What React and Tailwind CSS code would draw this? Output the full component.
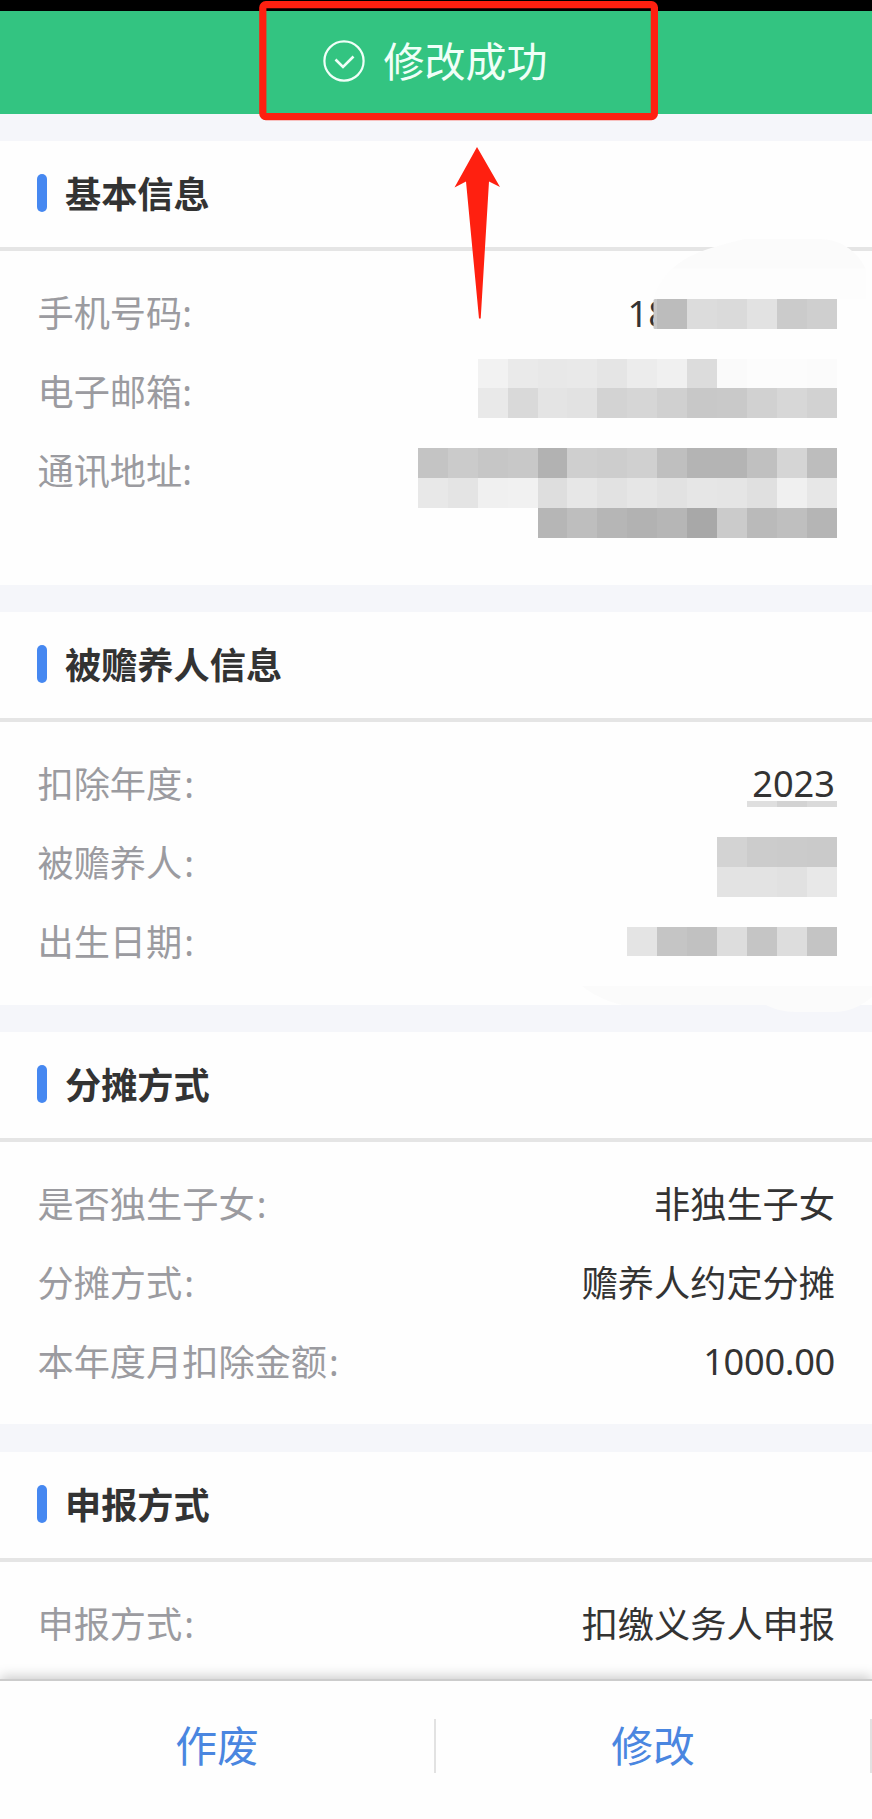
import React from "react";

const sections = [
  {
    title: "基本信息",
    box: "h-[444px] mb-[27px]",
    colon: "ml-0",
    rows: [
      { label: "手机号码", value: "18", valueClass: "mr-[166px]" },
      { label: "电子邮箱" },
      { label: "通讯地址" },
    ],
  },
  {
    title: "被赡养人信息",
    box: "h-[393px] mb-[27px]",
    colon: "ml-[2px]",
    rows: [{ label: "扣除年度", value: "2023", valueClass: "mb-[2px]" }, { label: "被赡养人" }, { label: "出生日期" }],
  },
  {
    title: "分摊方式",
    box: "h-[392px] mb-[28px]",
    colon: "ml-[2px]",
    rows: [
      { label: "是否独生子女", value: "非独生子女" },
      { label: "分摊方式", value: "赡养人约定分摊" },
      { label: "本年度月扣除金额", value: "1000.00", valueClass: "mb-[2px] tracking-[-0.3px]" },
    ],
  },
  {
    title: "申报方式",
    box: "h-[393px]",
    colon: "ml-[2px]",
    rows: [{ label: "申报方式", value: "扣缴义务人申报" }],
  },
];

// Each strip ends at the right content edge, cells listed left to right
const CELL = 29.9;
const RIGHT = 836.5;
const strips = [
  { y: 298.8, cells: ["#bcbcbc", "#dcdcdc", "#dadada", "#e2e2e2", "#cbcbcb", "#cfcfcf"] },
  { y: 358.5, cells: ["#f2f2f2", "#eaeaea", "#e8e8e8", "#e9e9e9", "#e5e5e5", "#ececec", "#f0f0f0", "#dcdcdc", "#fafafa", "#fcfcfc", "#fcfcfc", "#fbfbfb"] },
  { y: 388.4, cells: ["#e9e9e9", "#d9d9d9", "#e4e4e4", "#e2e2e2", "#d3d3d3", "#d6d6d6", "#d0d0d0", "#c8c8c8", "#c9c9c9", "#d1d1d1", "#d7d7d7", "#d2d2d2"] },
  { y: 448.2, cells: ["#c4c4c4", "#cbcbcb", "#c6c6c6", "#c8c8c8", "#b2b2b2", "#cfcfcf", "#cdcdcd", "#d0d0d0", "#bfbfbf", "#b4b4b4", "#b4b4b4", "#c0c0c0", "#d5d5d5", "#bdbdbd"] },
  { y: 478.1, cells: ["#e8e8e8", "#e4e4e4", "#f0f0f0", "#f1f1f1", "#dedede", "#e7e7e7", "#e2e2e2", "#e6e6e6", "#e2e2e2", "#e6e6e6", "#e5e5e5", "#e0e0e0", "#f0f0f0", "#e7e7e7"] },
  { y: 508, cells: ["#b6b6b6", "#bebebe", "#b6b6b6", "#b2b2b2", "#b6b6b6", "#a8a8a8", "#cbcbcb", "#bababa", "#bfbfbf", "#b5b5b5"] },
  { y: 801, h: 6, cells: ["#dfdfdf", "#d3d3d3", "#dadada"] },
  { y: 836.8, cells: ["#d3d3d3", "#cccccc", "#cbcbcb", "#cacaca"] },
  { y: 866.7, cells: ["#e3e3e3", "#e3e3e3", "#e1e1e1", "#e8e8e8"] },
  { y: 926.5, cells: ["#e4e4e4", "#c5c5c5", "#c1c1c1", "#dddddd", "#c5c5c5", "#dddddd", "#c4c4c4"] },
];

function Section({ title, box, colon, rows }) {
  return (
    <section className={`shrink-0 bg-[#fefefe] ${box}`}>
      <div className="h-[110px] border-b-4 border-[#e5e5e5] flex items-center pl-[37px] gap-[18px]">
        <span className="w-[10px] h-[38px] mb-[2px] rounded-full bg-[#4688f1]" />
        <h2 className="text-[36.2px] leading-none font-bold text-[#333333] mt-px">{title}</h2>
      </div>
      <div className="pt-[23px] pl-[37.5px] pr-[37px] text-[36.2px] leading-none">
        {rows.map((row) => (
          <div key={row.label} className="h-[78.8px] flex items-center justify-between">
            <span className="text-[#9b9ba0]">
              {row.label}
              <span className={colon}>:</span>
            </span>
            {row.value && <span className={`text-[#333333] ${row.valueClass || ""}`}>{row.value}</span>}
          </div>
        ))}
      </div>
    </section>
  );
}

function Overlay() {
  return (
    <svg className="absolute inset-0 pointer-events-none" width="872" height="1819" viewBox="0 0 872 1819">
      {/* Brush edges */}
      <path d="M672 269C690 252 716 246 745 239H820C843 240 857 252 866 269Z" fill="#fbfbfb" />
      <path d="M653 299C658 286 663 277 672 268.5H866V299Z" fill="#fdfdfd" />
      <path d="M582 986H872V997C860 1007 848 1012 834 1012H796C783 1012 774 1009 766 1005H622C605 1001 592 994 582 986Z" fill="#fbfbfb" />

      {/* Masked values */}
      <rect x="653.5" y="299" width="4.500" height="30" rx="1.5" fill="#c8c8c8" />
      <g shapeRendering="crispEdges">
        {strips.map((strip) =>
          strip.cells.map((fill, i) => (
            <rect
              key={`${strip.y}-${i}`}
              x={RIGHT - (strip.cells.length - i) * CELL}
              y={strip.y}
              width={CELL}
              height={strip.h || CELL}
              fill={fill}
            />
          ))
        )}
      </g>

      {/* Callout */}
      <rect x="262.8" y="4.6" width="391.6" height="112" rx="3" fill="none" stroke="#ff2010" strokeWidth="7.2" />
      <path d="M477 147L500 187L489 181.500L480.700 318.500H479L466 181.500L454.500 187.500Z" fill="#ff2010" />
    </svg>
  );
}

export default function App() {
  return (
    <div className="relative w-[872px] h-[1819px] overflow-hidden flex flex-col bg-[#f5f6fa] font-['Noto_Sans','Noto_Sans_CJK_SC',sans-serif]">
      <div className="h-[11px] shrink-0 bg-black" />
      <header className="h-[103px] shrink-0 bg-[#33c481] flex items-center justify-center gap-[19px] pr-[2px] text-[#f0fff8]">
        <svg width="42" height="42" viewBox="0 0 42 42" fill="none" stroke="currentColor" strokeWidth="2.2" className="mb-[3px]">
          <circle cx="21" cy="21" r="19.600" />
          <path d="M12.500 19.500L20 27L30.500 16.500" strokeWidth="2.600" />
        </svg>
        <h1 className="text-[41px] leading-none mb-[2px]">修改成功</h1>
      </header>

      <main className="flex-1 min-h-0 overflow-hidden flex flex-col pt-[27px]">
        {sections.map((section) => (
          <Section key={section.title} {...section} />
        ))}
      </main>

      <footer className="relative h-[140px] shrink-0 bg-[#fefefe] border-t-2 border-[#cccccc] shadow-[0_-2px_12px_rgba(0,0,0,0.22)] flex items-start text-[41.8px] leading-none text-[#4a86e0]">
        <button className="flex-1 h-[129px] flex items-center justify-center">作废</button>
        <span className="w-[2px] h-[54px] mt-[38px] bg-[#e2e2e2]" />
        <button className="flex-1 h-[129px] flex items-center justify-center">修改</button>
        <span className="w-[2px] h-[54px] mt-[38px] bg-[#e2e2e2]" />
      </footer>

      <Overlay />
    </div>
  );
}
